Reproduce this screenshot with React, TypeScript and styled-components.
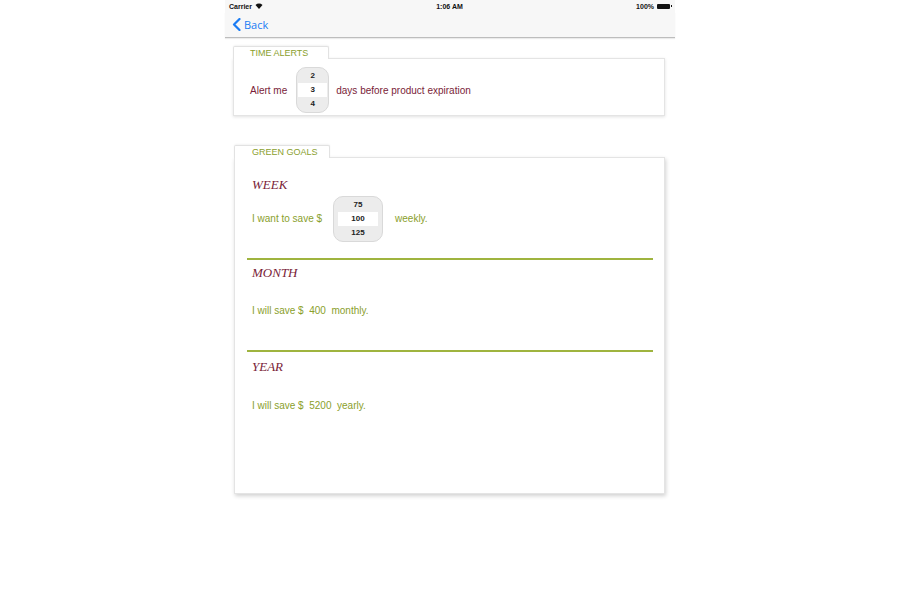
import React from "react";
import styled, { createGlobalStyle } from "styled-components";

const GREEN = "#8aa02c";
const MAROON = "#7a1d38";

const Global = createGlobalStyle`
  html, body { margin: 0; padding: 0; background: #ffffff; }
  body { font-family: "Liberation Sans", Arial, sans-serif; }
`;

const Screen = styled.div`
  width: 450px;
  margin: 0 auto;
  height: 600px;
  background: #ffffff;
  display: flex;
  flex-direction: column;
`;

const StatusBar = styled.div`
  height: 12px;
  background: #f7f7f7;
  display: grid;
  grid-template-columns: 1fr auto 1fr;
  align-items: center;
  padding: 0 5px 0 4px;
  font-size: 7px;
  font-weight: bold;
  color: #111;
`;

const StatusLeft = styled.div`
  display: flex;
  align-items: center;
  gap: 3px;
`;

const StatusRight = styled.div`
  display: flex;
  align-items: center;
  justify-content: flex-end;
  gap: 3px;
`;

const Battery = styled.div`
  width: 13px;
  height: 5px;
  background: #111;
  border-radius: 1px;
  position: relative;
  &::after {
    content: "";
    position: absolute;
    right: -2px;
    top: 1.5px;
    width: 1px;
    height: 2px;
    background: #111;
  }
`;

const NavBar = styled.div`
  height: 25px;
  background: #f7f7f7;
  border-bottom: 1px solid #bdbdbd;
  box-shadow: 0 1px 1px rgba(0, 0, 0, 0.08);
  display: flex;
  align-items: center;
  padding-left: 7px;
  gap: 3px;
  color: #1a7cf4;
  font-size: 11px;
  font-family: "Open Sans", "Liberation Sans", sans-serif;
`;

const Content = styled.div`
  padding: 8px 10px 0 8px;
  display: flex;
  flex-direction: column;
`;

const Section = styled.div<{ $top?: number; $inset?: number }>`
  display: flex;
  flex-direction: column;
  align-items: flex-start;
  margin-top: ${(p) => p.$top ?? 0}px;
  padding-left: ${(p) => p.$inset ?? 0}px;
`;

const Tab = styled.div`
  width: 96px;
  height: 13px;
  box-sizing: border-box;
  background: #fff;
  border: 1px solid #e2e2e2;
  border-bottom: none;
  border-radius: 2px 2px 0 0;
  box-shadow: 0 -1px 2px rgba(0, 0, 0, 0.05);
  margin-bottom: -1px;
  position: relative;
  z-index: 1;
  font-size: 9px;
  color: ${GREEN};
  line-height: 13px;
`;

const TabLabel = styled.span<{ $pad: number }>`
  padding-left: ${(p) => p.$pad}px;
`;

const Card = styled.div<{ $height: number; $strong?: boolean }>`
  align-self: stretch;
  height: ${(p) => p.$height}px;
  box-sizing: border-box;
  background: #fff;
  border: 1px solid #e4e4e4;
  box-shadow: ${(p) =>
    p.$strong
      ? "1px 2px 4px rgba(0,0,0,0.18)"
      : "0 1px 3px rgba(0,0,0,0.12)"};
  display: flex;
  flex-direction: column;
`;

const AlertRow = styled.div`
  display: flex;
  align-items: center;
  padding: 8px 0 0 16px;
  font-size: 10px;
  color: ${MAROON};
`;

const Picker = styled.div<{ $w: number; $inset: number }>`
  width: ${(p) => p.$w}px;
  height: 46px;
  box-sizing: border-box;
  border-radius: 10px;
  border: 1px solid #d9d9d9;
  background: #ececec;
  display: flex;
  flex-direction: column;
  justify-content: center;
  padding: 0 ${(p) => p.$inset}px;
  font-size: 8px;
  font-weight: bold;
  color: #222;
`;

const PickItem = styled.div<{ $sel?: boolean }>`
  height: 14px;
  line-height: 14px;
  text-align: center;
  background: ${(p) => (p.$sel ? "#ffffff" : "transparent")};
`;

const Gap = styled.span<{ $w: number }>`
  display: inline-block;
  width: ${(p) => p.$w}px;
`;

const Goal = styled.div<{ $pt: number; $pb: number }>`
  padding: ${(p) => p.$pt}px 0 ${(p) => p.$pb}px 17px;
  display: flex;
  flex-direction: column;
  align-items: flex-start;
`;

const GoalTitle = styled.div`
  font-family: "Liberation Serif", "Times New Roman", serif;
  font-style: italic;
  font-size: 13px;
  line-height: 16px;
  color: ${MAROON};
`;

const GoalRow = styled.div<{ $mt: number }>`
  margin-top: ${(p) => p.$mt}px;
  display: flex;
  align-items: center;
  font-size: 10px;
  line-height: 14px;
  color: ${GREEN};
  white-space: pre;
`;

const Divider = styled.div`
  height: 2px;
  background: #9fb43f;
  margin: 0 11px 0 12px;
`;

const Wifi = () => (
  <svg width="8" height="6" viewBox="0 0 8 6">
    <path d="M0.5 2 A5 5 0 0 1 7.5 2 L4 6 Z" fill="#111" />
  </svg>
);

const Chevron = () => (
  <svg width="9" height="13" viewBox="0 0 9 13">
    <path
      d="M7.5 1 L2 6.5 L7.5 12"
      fill="none"
      stroke="#1a7cf4"
      strokeWidth="2.2"
      strokeLinecap="round"
      strokeLinejoin="round"
    />
  </svg>
);

export default function App() {
  return (
    <>
      <Global />
      <Screen>
        <StatusBar>
          <StatusLeft>
            Carrier <Wifi />
          </StatusLeft>
          <div>1:06 AM</div>
          <StatusRight>
            100% <Battery />
          </StatusRight>
        </StatusBar>
        <NavBar>
          <Chevron />
          Back
        </NavBar>
        <Content>
          <Section>
            <Tab>
              <TabLabel $pad={16}>TIME ALERTS</TabLabel>
            </Tab>
            <Card $height={58}>
              <AlertRow>
                Alert me
                <Gap $w={9} />
                <Picker $w={33} $inset={1}>
                  <PickItem>2</PickItem>
                  <PickItem $sel>3</PickItem>
                  <PickItem>4</PickItem>
                </Picker>
                <Gap $w={7} />
                days before product expiration
              </AlertRow>
            </Card>
          </Section>
          <Section $top={29} $inset={1}>
            <Tab>
              <TabLabel $pad={17}>GREEN GOALS</TabLabel>
            </Tab>
            <Card $height={337} $strong>
              <Goal $pt={19} $pb={16}>
                <GoalTitle>WEEK</GoalTitle>
                <GoalRow $mt={3}>
                  I want to save $
                  <Gap $w={11} />
                  <Picker $w={50} $inset={4}>
                    <PickItem>75</PickItem>
                    <PickItem $sel>100</PickItem>
                    <PickItem>125</PickItem>
                  </Picker>
                  <Gap $w={12} />
                  weekly.
                </GoalRow>
              </Goal>
              <Divider />
              <Goal $pt={5} $pb={32}>
                <GoalTitle>MONTH</GoalTitle>
                <GoalRow $mt={23}>I will save $  400  monthly.</GoalRow>
              </Goal>
              <Divider />
              <Goal $pt={7} $pb={0}>
                <GoalTitle>YEAR</GoalTitle>
                <GoalRow $mt={24}>I will save $  5200  yearly.</GoalRow>
              </Goal>
            </Card>
          </Section>
        </Content>
      </Screen>
    </>
  );
}
